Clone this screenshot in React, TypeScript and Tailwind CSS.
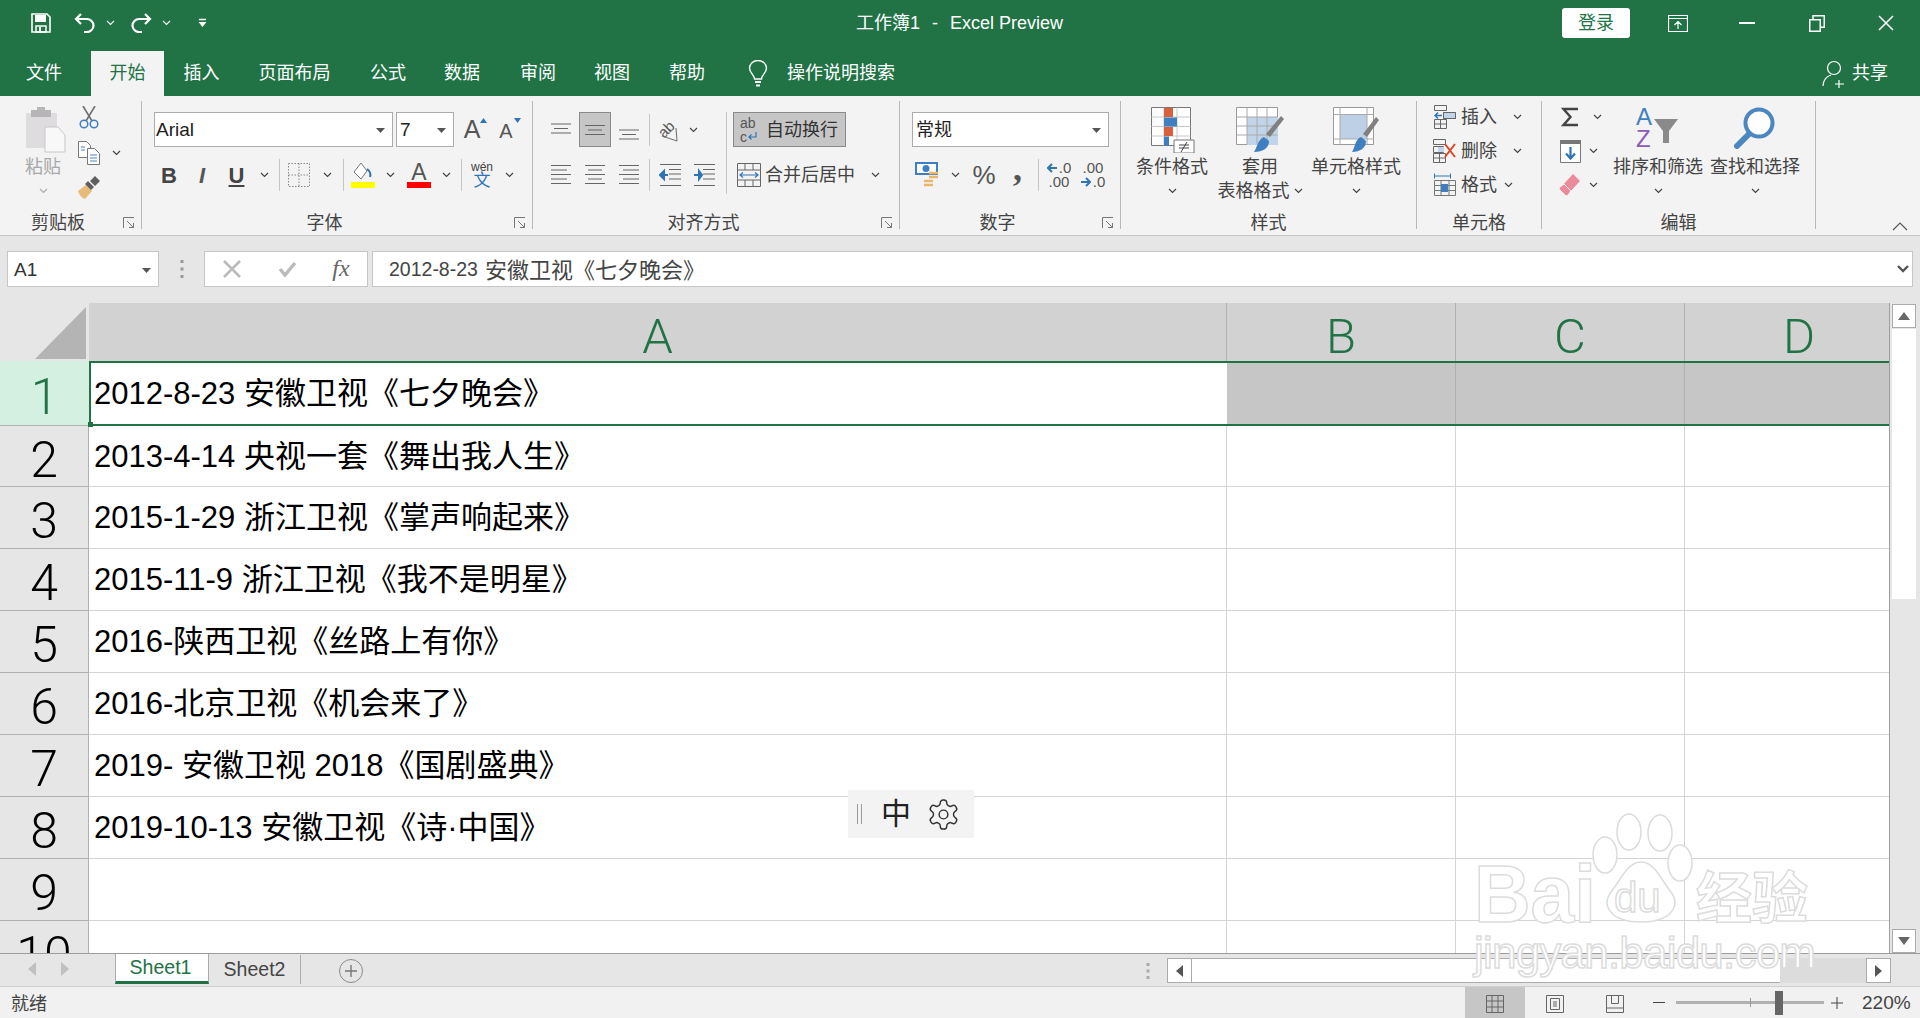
import type { ReactNode } from "react"

const C = ({ className, children }: { className?: string; children?: ReactNode }) => (
  <div className={"flex items-center justify-center shrink-0 " + (className ?? "")}>{children}</div>
)

const Chev = () => (
  <svg width="9" height="6" viewBox="0 0 9 6" className="shrink-0">
    <path d="M1 1l3.5 3.5L8 1" fill="none" stroke="#444" strokeWidth="1.2" />
  </svg>
)

const Caret = () => (
  <svg width="9" height="5" viewBox="0 0 9 5" className="shrink-0">
    <path d="M0 0h9L4.500 5z" fill="#555" />
  </svg>
)

const Launcher = () => (
  <svg width="12" height="12" viewBox="0 0 12 12">
    <path d="M.5 11V.5H11M4 4l6.500 6.500M10.500 6v4.500H6" fill="none" stroke="#777" strokeWidth="1" />
  </svg>
)

const Sep = () => <div className="w-px h-[32px] bg-[#c6c6c6]" />

const TextLines = ({ rows }: { rows: [number, number][] }) => (
  <svg width="22" height="24" viewBox="0 0 22 24">
    {rows.map(([a, b], i) => (
      <path key={i} d={`M${a} ${2.500 + i * 4.500}H${b}`} stroke="#666" strokeWidth="1" />
    ))}
  </svg>
)

const VAlign = ({ top }: { top: number }) => (
  <svg width="22" height="24" viewBox="0 0 22 24">
    {[0, 1, 2].map((i) => (
      <path key={i} d={`M${i === 1 ? 4 : 1} ${top + i * 4.500}H${i === 1 ? 18 : 21}`} stroke="#666" strokeWidth="1" />
    ))}
  </svg>
)

function Group({ w, label, launcher, children }: { w: string; label: string; launcher?: boolean; children: ReactNode }) {
  return (
    <div className={"h-[128px] flex flex-col shrink-0 border-r border-[#b9b9b9] " + w}>
      <div className="h-[112px] flex">{children}</div>
      <div className="h-[16px] flex items-center">
        <div className="flex-1 text-center text-[18px] leading-[16px] text-[#444] pt-[4px]">{label}</div>
        {launcher && <C className="w-[25px] h-[16px] pt-[4px]"><Launcher /></C>}
      </div>
    </div>
  )
}

function BigButton({ w, icon, lines, chevInline }: { w: string; icon: ReactNode; lines: string[]; chevInline?: boolean }) {
  return (
    <div className={"flex flex-col items-center pt-[6px] shrink-0 " + w}>
      <div className="h-[48px] flex items-start justify-center">{icon}</div>
      {lines.map((l, i) => (
        <div key={i} className="text-[18px] leading-[24px] text-[#444] whitespace-nowrap flex items-center gap-[4px]">
          {l}
          {chevInline && i === lines.length - 1 && <Chev />}
        </div>
      ))}
      {!chevInline && <C className="h-[23px]"><Chev /></C>}
    </div>
  )
}

const ColHead = ({ w, ch }: { w: string; ch: string }) => (
  <div className={"shrink-0 h-full bg-[#d2d2d2] border-r border-[#b1b1b1] flex items-center justify-center text-[#217346] text-[49px] font-light pt-[9px] [font-family:Roboto,sans-serif] " + w}>
    {ch}
  </div>
)

const rows = [
  ["2", "2013-4-14 央视一套《舞出我人生》"],
  ["3", "2015-1-29 浙江卫视《掌声响起来》"],
  ["4", "2015-11-9 浙江卫视《我不是明星》"],
  ["5", "2016-陕西卫视《丝路上有你》"],
  ["6", "2016-北京卫视《机会来了》"],
  ["7", "2019- 安徽卫视 2018《国剧盛典》"],
  ["8", "2019-10-13 安徽卫视《诗·中国》"],
  ["9", ""],
  ["10", ""],
]

export default function App() {
  return (
    <div className="relative w-[1920px] h-[1018px] overflow-hidden flex flex-col bg-white text-[#444] [font-family:'Liberation_Sans','Noto_Sans_CJK_SC',sans-serif]">
      {/* title bar */}
      <div className="h-[51px] shrink-0 bg-[#217346] flex items-center pb-[5px] text-white">
        <div className="w-[856px] shrink-0 flex items-center pl-[31px]">
          <svg width="20" height="20" viewBox="0 0 20 20">
            <path d="M1 1h15l3 3v15H1z" fill="none" stroke="#fff" strokeWidth="1.600" />
            <path d="M4 2h11v7H4z" fill="#fff" />
            <path d="M5 13h10v6H5z" fill="none" stroke="#fff" strokeWidth="1.500" />
            <path d="M8 14h2v4H8z" fill="#fff" />
          </svg>
          <svg width="22" height="20" viewBox="0 0 22 20" className="ml-[23px]">
            <path d="M7 1L2 6l5 5M2 6h11a6.500 6.500 0 0 1 0 13h-3" fill="none" stroke="#fff" strokeWidth="2.200" />
          </svg>
          <svg width="9" height="6" viewBox="0 0 9 6" className="ml-[10px]"><path d="M1 1l3.500 3.500L8 1" fill="none" stroke="#fff" strokeWidth="1.200" /></svg>
          <svg width="22" height="20" viewBox="0 0 22 20" className="ml-[15px]">
            <path d="M15 1l5 5-5 5M20 6H9a6.500 6.500 0 0 0 0 13h3" fill="none" stroke="#fff" strokeWidth="2.200" />
          </svg>
          <svg width="9" height="6" viewBox="0 0 9 6" className="ml-[10px]"><path d="M1 1l3.500 3.500L8 1" fill="none" stroke="#fff" strokeWidth="1.200" /></svg>
          <svg width="9" height="10" viewBox="0 0 9 10" className="ml-[27px]">
            <path d="M1 1.500h7" stroke="#fff" strokeWidth="1.500" /><path d="M.5 4h8L4.500 9z" fill="#fff" />
          </svg>
        </div>
        <div className="w-[210px] shrink-0 text-[18px] whitespace-nowrap leading-none flex">
          工作簿1<span className="mx-[12px]">-</span>Excel Preview
        </div>
        <div className="flex-1" />
        <div className="w-[68px] h-[30px] bg-white rounded-[3px] text-[#217346] text-[18px] flex items-center justify-center">登录</div>
        <C className="w-[69px] ml-[13px]">
          <svg width="20" height="17" viewBox="0 0 20 17"><path d="M.5.500h19v16H.5zM.5 3.500h19M10 14V6.500M6.500 10L10 6.500l3.500 3.500" fill="none" stroke="#fff" strokeWidth="1.200" /></svg>
        </C>
        <C className="w-[70px]"><div className="w-[16px] h-[2px] bg-white" /></C>
        <C className="w-[69px]">
          <svg width="16" height="17" viewBox="0 0 16 17"><path d="M.75 4.750h10.500v11.500H.75zM4 4.500V.75h11.250v11.500H11.500" fill="none" stroke="#fff" strokeWidth="1.500" /></svg>
        </C>
        <C className="w-[69px]">
          <svg width="16" height="16" viewBox="0 0 16 16"><path d="M1 1l14 14M15 1L1 15" stroke="#fff" strokeWidth="1.600" /></svg>
        </C>
      </div>

      {/* tabs */}
      <div className="h-[45px] shrink-0 bg-[#217346] flex items-center text-white text-[18px]">
        <C className="w-[91px] h-full pr-[3px]">文件</C>
        <C className="w-[73px] h-full bg-[#f3f3f3] text-[#217346]">开始</C>
        <C className="w-[75px] h-full">插入</C>
        <C className="w-[111px] h-full">页面布局</C>
        <C className="w-[76px] h-full">公式</C>
        <C className="w-[72px] h-full">数据</C>
        <C className="w-[80px] h-full">审阅</C>
        <C className="w-[68px] h-full">视图</C>
        <C className="w-[82px] h-full">帮助</C>
        <svg width="20" height="28" viewBox="0 0 20 28" className="ml-[20px]">
          <path d="M6.500 19c0-4-5-6-5-11a8.500 7.500 0 0 1 17 0c0 5-5 7-5 11z" fill="none" stroke="#fff" strokeWidth="1.400" />
          <path d="M7 22h6M8 25.500h4" stroke="#fff" strokeWidth="1.800" />
        </svg>
        <div className="ml-[19px]">操作说明搜索</div>
        <div className="flex-1" />
        <svg width="24" height="28" viewBox="0 0 24 28" className="mr-[6px]">
          <circle cx="12" cy="8" r="6.500" fill="none" stroke="#fff" strokeWidth="1.200" />
          <path d="M1 26c0-6 4-10 8-11M17 20v8M13 24h9" fill="none" stroke="#fff" strokeWidth="1.200" />
        </svg>
        <div className="mr-[32px]">共享</div>
      </div>

      {/* ribbon */}
      <div className="h-[140px] shrink-0 bg-[#f3f3f3] border-b border-[#c6c6c6] pt-[5px] flex relative">
        <Group w="w-[142px]" label="剪贴板" launcher>
          <div className="w-[74px] pt-[6px] pl-[12px] flex flex-col items-center">
            <div className="h-[48px] ml-[4px]">
              <svg width="41" height="46" viewBox="0 0 41 46">
                <path d="M1 6h31v35H1z" fill="#dedcde" />
                <path d="M6 3h6V0h8v3h6v7H6z" fill="#b7b5b7" />
                <path d="M20 20h13l7 8v17H20z" fill="#f8f8f8" stroke="#c9c7c9" />
              </svg>
            </div>
            <div className="text-[18px] leading-[24px] text-[#a8a8a8]">粘贴</div>
            <C className="h-[23px]"><svg width="9" height="6" viewBox="0 0 9 6"><path d="M1 1l3.500 3.500L8 1" fill="none" stroke="#aaa" strokeWidth="1.200" /></svg></C>
          </div>
          <div className="flex flex-col -mt-px">
            <C className="w-[30px] h-[35px]">
              <svg width="20" height="23" viewBox="0 0 20 23">
                <path d="M4 0l9 15M16 0L7 15" stroke="#6f6f6f" strokeWidth="1.600" />
                <circle cx="5" cy="18" r="3.800" fill="none" stroke="#3f7fbf" strokeWidth="1.500" />
                <circle cx="15" cy="18" r="3.800" fill="none" stroke="#3f7fbf" strokeWidth="1.500" />
              </svg>
            </C>
            <div className="h-[35px] flex items-center">
              <C className="w-[30px]">
                <svg width="22" height="24" viewBox="0 0 22 24">
                  <path d="M.5.500h8l4 4v12H.5z" fill="#fff" stroke="#777" />
                  <path d="M9.500 7.500h7l5 5v11h-12z" fill="#fff" stroke="#777" />
                  <path d="M3 6h4M3 9h4M12 14h7M12 17h7M12 20h7" stroke="#4a86c0" />
                </svg>
              </C>
              <div className="ml-[8px]"><Chev /></div>
            </div>
            <C className="w-[30px] h-[35px]">
              <svg width="24" height="24" viewBox="0 0 24 24">
                <path d="M1 15l8-6 6 6-7 8c-3-1-6-4-7-8z" fill="#e7bb78" />
                <path d="M8 8l6 6 3-3-6-6zM13 5l5-5 5 5-5 5z" fill="#5f5f5f" />
              </svg>
            </C>
          </div>
        </Group>

        <Group w="w-[391px]" label="字体" launcher>
          <div className="pt-[11px] pl-[12px] flex flex-col">
            <div className="h-[35px] flex items-center">
              <div className="w-[239px] h-full bg-white border border-[#ababab] flex items-center justify-between pl-[1px] pt-[1px] pr-[7px] text-[19px] text-[#222]">
                Arial <Caret />
              </div>
              <div className="w-[58px] h-full ml-[3px] bg-white border border-[#ababab] flex items-center justify-between pl-[3px] pt-[1px] pr-[7px] text-[19px] text-[#222]">
                7 <Caret />
              </div>
              <C className="w-[34px] h-full relative ml-[1px]">
                <span className="text-[25px] text-[#555]">A</span>
                <svg width="7" height="5" viewBox="0 0 7 5" className="absolute top-[6px] right-[2px]"><path d="M0 5h7L3.500 0z" fill="#2f75b5" /></svg>
              </C>
              <C className="w-[34px] h-full relative">
                <span className="text-[20px] text-[#555] pt-[3px]">A</span>
                <svg width="7" height="5" viewBox="0 0 7 5" className="absolute top-[6px] right-[2px]"><path d="M0 0h7L3.500 5z" fill="#2f75b5" /></svg>
              </C>
            </div>
            <div className="h-[36px] mt-[10px] flex items-center">
              <C className="w-[30px] text-[22px] font-bold text-[#444]">B</C>
              <C className="w-[36px] text-[22px] italic font-bold text-[#555]">I</C>
              <C className="w-[33px] text-[22px] font-bold underline text-[#444]">U</C>
              <C className="w-[22px]"><Chev /></C>
              <C className="w-[8px]"><Sep /></C>
              <C className="w-[32px]">
                <svg width="22" height="24" viewBox="0 0 22 24">
                  <path d="M.5.500h21v23H.5zM11 .500v23M.5 12h21" fill="none" stroke="#888" strokeDasharray="1.500 1.500" />
                </svg>
              </C>
              <C className="w-[24px]"><Chev /></C>
              <C className="w-[8px]"><Sep /></C>
              <C className="w-[32px]">
                <svg width="24" height="26" viewBox="0 0 24 26">
                  <path d="M10 1L3 10l7 7 6-8z" fill="#fff" stroke="#777" />
                  <path d="M16 7c3 2 4 5 3 8" fill="none" stroke="#2f75b5" strokeWidth="2" />
                  <rect y="20" width="24" height="6" fill="#ffff00" />
                </svg>
              </C>
              <C className="w-[22px]"><Chev /></C>
              <div className="w-[36px] flex flex-col items-center">
                <span className="text-[23px] leading-[18px] text-[#555]">A</span>
                <div className="w-[24px] h-[6px] bg-[#ff0000] mt-[1px]" />
              </div>
              <C className="w-[18px]"><Chev /></C>
              <C className="w-[12px]"><Sep /></C>
              <div className="w-[30px] flex flex-col items-center leading-none">
                <span className="text-[12px] text-[#444]">wén</span>
                <span className="text-[17px] text-[#2f75b5] -mt-px">文</span>
              </div>
              <C className="w-[24px]"><Chev /></C>
            </div>
          </div>
        </Group>

        <Group w="w-[367px]" label="对齐方式" launcher>
          <div className="pt-[11px] flex">
            <div className="w-[194px] h-[82px] pl-[12px] border-r border-[#c6c6c6] flex flex-col">
              <div className="h-[35px] flex items-center">
                <C className="w-[32px]"><VAlign top={6} /></C>
                <C className="w-[32px] h-full ml-[2px] bg-[#c6c6c6] border border-[#8a8a8a]"><VAlign top={7.500} /></C>
                <C className="w-[32px] ml-[2px]"><VAlign top={12} /></C>
                <C className="w-[8px]"><Sep /></C>
                <C className="w-[34px]">
                  <svg width="24" height="26" viewBox="0 0 24 26" className="overflow-visible">
                    <text x="1" y="18" fontSize="15" fill="#555" transform="rotate(-45 8 14)">ab</text>
                    <path d="M4 19l15 5M19 24l-1-13" fill="none" stroke="#777" strokeWidth="1.100" />
                  </svg>
                </C>
                <C className="w-[12px]"><Chev /></C>
              </div>
              <div className="h-[36px] mt-[10px] flex items-center">
                <C className="w-[32px]"><TextLines rows={[[1, 21], [1, 17], [1, 21], [1, 17], [1, 21]]} /></C>
                <C className="w-[32px] ml-[2px]"><TextLines rows={[[1, 21], [4, 18], [1, 21], [4, 18], [1, 21]]} /></C>
                <C className="w-[32px] ml-[2px]"><TextLines rows={[[1, 21], [5, 21], [1, 21], [5, 21], [1, 21]]} /></C>
                <C className="w-[8px]"><Sep /></C>
                <C className="w-[34px]">
                  <svg width="22" height="24" viewBox="0 0 22 24">
                    <path d="M1 1.500h21M10 6.500h12M10 11h12M10 16h12M1 22.500h21" stroke="#666" />
                    <path d="M9 12H4M5 8l-4 4 4 4z" stroke="#2f75b5" strokeWidth="2" fill="#2f75b5" />
                  </svg>
                </C>
                <C className="w-[34px]">
                  <svg width="22" height="24" viewBox="0 0 22 24">
                    <path d="M1 1.500h21M10 6.500h12M10 11h12M10 16h12M1 22.500h21" stroke="#666" />
                    <path d="M1 12h5M6 8l3 4-3 4z" stroke="#2f75b5" strokeWidth="2" fill="#2f75b5" />
                  </svg>
                </C>
              </div>
            </div>
            <div className="pl-[6px] flex flex-col">
              <div className="w-[113px] h-[35px] bg-[#c6c6c6] border border-[#8a8a8a] flex items-center pl-[6px]">
                <div className="w-[20px] flex flex-col text-[14px] leading-[14px] text-[#555]">
                  <span>ab</span>
                  <div className="flex items-center gap-[1px]">
                    c
                    <svg width="9" height="9" viewBox="0 0 9 9"><path d="M8 0v5H1M3.500 2.500L1 5l2.500 2.500" fill="none" stroke="#2f75b5" strokeWidth="1.200" /></svg>
                  </div>
                </div>
                <span className="ml-[6px] pt-[1px] text-[18px] text-[#333] whitespace-nowrap">自动换行</span>
              </div>
              <div className="h-[36px] mt-[10px] flex items-center pl-[4px]">
                <svg width="24" height="24" viewBox="0 0 24 24" className="shrink-0">
                  <path d="M.5.500h23v23H.5zM.5 7h23M.5 17h23M8 .500V7M16 .500V7M8 17v6.500M16 17v6.500" fill="none" stroke="#666" />
                  <path d="M3 12h18M6 9.500L3 12l3 2.500M18 9.500l3 2.500-3 2.500" fill="none" stroke="#2f75b5" strokeWidth="1.200" />
                </svg>
                <span className="ml-[4px] text-[18px] whitespace-nowrap">合并后居中</span>
                <div className="ml-[16px]"><Chev /></div>
              </div>
            </div>
          </div>
        </Group>

        <Group w="w-[221px]" label="数字" launcher>
          <div className="pt-[11px] pl-[12px] flex flex-col">
            <div className="w-[197px] h-[35px] bg-white border border-[#ababab] flex items-center justify-between pl-[3px] pt-[1px] pr-[7px] text-[18px] text-[#222]">
              常规 <Caret />
            </div>
            <div className="h-[36px] mt-[10px] flex items-center">
              <C className="w-[30px]">
                <svg width="24" height="26" viewBox="0 0 24 26">
                  <path d="M0 0h23v13H0z" fill="#3f7fbf" />
                  <path d="M2 2h19v9H2z" fill="#fff" />
                  <circle cx="11" cy="6.500" r="3.500" fill="#3f7fbf" />
                  <path d="M14 11h9M14 15h9M9 19h9M9 23h9" stroke="#e9b76b" strokeWidth="2.500" />
                </svg>
              </C>
              <C className="w-[26px]"><Chev /></C>
              <C className="w-[32px] text-[26px] text-[#555]">%</C>
              <C className="w-[35px] text-[36px] font-bold text-[#555] leading-none pb-[14px] [font-family:'Liberation_Serif',serif]">,</C>
              <C className="w-[6px]"><Sep /></C>
              <div className="w-[36px] flex flex-col items-center text-[15px] leading-[14px] text-[#555]">
                <div className="flex items-center gap-[2px]">
                  <svg width="10" height="10" viewBox="0 0 10 10"><path d="M10 5H2M5 1L1 5l4 4" fill="none" stroke="#2f75b5" strokeWidth="2" /></svg>
                  .0
                </div>
                <span>.00</span>
              </div>
              <div className="w-[32px] flex flex-col items-center text-[15px] leading-[14px] text-[#555]">
                <span>.00</span>
                <div className="flex items-center gap-[2px]">
                  <svg width="10" height="10" viewBox="0 0 10 10"><path d="M0 5h8M5 1l4 4-4 4" fill="none" stroke="#2f75b5" strokeWidth="2" /></svg>
                  .0
                </div>
              </div>
            </div>
          </div>
        </Group>

        <Group w="w-[296px]" label="样式">
          <div className="flex pl-[13px]">
            <BigButton
              w="w-[76px]"
              lines={["条件格式"]}
              icon={
                <svg width="44" height="46" viewBox="0 0 44 46" className="ml-[2px]">
                  <path d="M.5.500h39v38H.5z" fill="#fff" stroke="#777" />
                  <path d="M.5 10h39M.5 19.500h39M.5 29h39M13 .500v38M26 .500v38" stroke="#c8c8c8" />
                  <path d="M13 1h9v9h-9zM13 20h9v9h-9z" fill="#d9603f" />
                  <path d="M13 10.500h13v9H13zM13 29.500h5v9h-5z" fill="#3f7fbf" />
                  <path d="M23 33h20v13H23z" fill="#fff" stroke="#777" />
                  <path d="M28 38h10M28 41h10M36 35l-6 10" fill="none" stroke="#444" />
                </svg>
              }
            />
            <BigButton
              w="w-[100px]"
              lines={["套用", "表格格式"]}
              chevInline
              icon={
                <svg width="48" height="46" viewBox="0 0 48 46">
                  <path d="M.5.500h41v37H.5z" fill="#fff" stroke="#999" />
                  <path d="M11 10h31v28H11z" fill="#c1d5ea" />
                  <path d="M.5 10h41M.5 19h41M.5 28h41M11 .500v37M21 .500v37M31 .500v37" stroke="#aaa" />
                  <path d="M30 27l15-18 3 3-14 18z" fill="#808080" />
                  <path d="M28 30l5 4c0 7-6 11-15 11 3-4 4-13 10-15z" fill="#3f7fbf" />
                </svg>
              }
            />
            <BigButton
              w="w-[92px]"
              lines={["单元格样式"]}
              icon={
                <svg width="46" height="46" viewBox="0 0 46 46">
                  <path d="M.5.500h40v37H.5z" fill="#fff" stroke="#999" />
                  <path d="M7 8h27v24H7z" fill="#bdd0e6" />
                  <path d="M.5 7.500h40M.5 32h40M7 .500v37M34 .500v37" stroke="#aaa" />
                  <path d="M30 27l13-17 3 3-12 17z" fill="#808080" />
                  <path d="M28 30l5 4c0 7-6 11-14 11 3-4 3-13 9-15z" fill="#3f7fbf" />
                </svg>
              }
            />
          </div>
        </Group>

        <Group w="w-[125px]" label="单元格">
          <div className="flex flex-col -mt-px">
            <div className="h-[34px] flex items-center">
              <C className="w-[24px] ml-[16px]">
                <svg width="22" height="24" viewBox="0 0 22 24">
                  <path d="M.5.500h12v5H.5zM.5 14.500h12v9H.5zM6.500 14.500v9M.5 19h12M9.500 7.500h12v6h-12z" fill="none" stroke="#666" />
                  <path d="M9.500 7.500h12v6h-12z" fill="#c1d5ea" stroke="#666" />
                  <path d="M8 10.500H1M4 7.500l-3 3 3 3" fill="none" stroke="#2f75b5" strokeWidth="1.500" />
                </svg>
              </C>
              <span className="ml-[4px] w-[36px] text-[18px]">插入</span>
              <div className="ml-[16px]"><Chev /></div>
            </div>
            <div className="h-[34px] flex items-center">
              <C className="w-[24px] ml-[16px]">
                <svg width="24" height="24" viewBox="0 0 24 24">
                  <path d="M.5.500h12v5H.5zM.5 14.500h12v9H.5zM6.500 14.500v9M.5 19h12M.5 7.500h10v6H.5z" fill="none" stroke="#666" />
                  <path d="M5 8h6v5H5z" fill="#c1d5ea" />
                  <path d="M12 5l10 13M22 5L12 18" stroke="#d9482b" strokeWidth="2" />
                </svg>
              </C>
              <span className="ml-[4px] w-[36px] text-[18px]">删除</span>
              <div className="ml-[16px]"><Chev /></div>
            </div>
            <div className="h-[34px] flex items-center">
              <C className="w-[24px] ml-[16px]">
                <svg width="22" height="25" viewBox="0 0 22 25">
                  <path d="M.5 3h16M.5.500v5M16.500.500v5" stroke="#2f75b5" />
                  <path d="M.5 7.500h21v15H.5zM7 7.500v15M15 7.500v15M.5 12.500h21M.5 17.500h21" fill="none" stroke="#777" />
                  <path d="M7 11h7v8H7z" fill="#3f7fbf" />
                </svg>
              </C>
              <span className="ml-[4px] w-[36px] text-[18px]">格式</span>
              <div className="ml-[7px]"><Chev /></div>
            </div>
          </div>
        </Group>

        <Group w="w-[274px]" label="编辑">
          <div className="w-[68px] flex flex-col -mt-px">
            <div className="h-[34px] flex items-center">
              <C className="w-[26px] ml-[15px]">
                <svg width="18" height="20" viewBox="0 0 18 20"><path d="M17 2H2.500l7 8-7 8H17" fill="none" stroke="#444" strokeWidth="2.400" /></svg>
              </C>
              <div className="ml-[10px]"><Chev /></div>
            </div>
            <div className="h-[34px] flex items-center">
              <C className="w-[26px] ml-[15px]">
                <svg width="21" height="23" viewBox="0 0 21 23">
                  <path d="M.5.500h20v22H.5z" fill="#fff" stroke="#777" />
                  <path d="M0 0h21v4H0z" fill="#777" />
                  <path d="M10.500 7v11M6 13.500l4.500 5 4.500-5" fill="none" stroke="#2f75b5" strokeWidth="2.200" />
                </svg>
              </C>
              <div className="ml-[6px]"><Chev /></div>
            </div>
            <div className="h-[34px] flex items-center">
              <C className="w-[26px] ml-[15px]">
                <svg width="22" height="22" viewBox="0 0 22 22">
                  <path d="M14 0l7 7L9 20l-7-7z" fill="#ea8a9b" />
                  <path d="M5 10l7 7-3 4c-1 1-2 1-3 0L1 16c-1-1-1-2 0-3z" fill="#ea8a9b" stroke="#f3f3f3" />
                </svg>
              </C>
              <div className="ml-[6px]"><Chev /></div>
            </div>
          </div>
          <BigButton
            w="w-[96px]"
            lines={["排序和筛选"]}
            icon={
              <svg width="44" height="41" viewBox="0 0 44 41" className="overflow-visible">
                <text x="0" y="18" fontSize="24" fill="#3f7fbf" fontWeight="400">A</text>
                <text x="0" y="40" fontSize="24" fill="#8e5bb5" fontWeight="400">Z</text>
                <path d="M18 12h24L33 24v12h-6V24z" fill="#8a8a8a" />
              </svg>
            }
          />
          <BigButton
            w="w-[98px]"
            lines={["查找和选择"]}
            icon={
              <svg width="42" height="42" viewBox="0 0 42 42">
                <circle cx="25" cy="16" r="13.500" fill="#fff" stroke="#4a86c0" strokeWidth="4" />
                <path d="M15 27L3 39" stroke="#4a86c0" strokeWidth="6" strokeLinecap="round" />
              </svg>
            }
          />
        </Group>

        <svg width="16" height="9" viewBox="0 0 16 9" className="absolute left-[1892px] top-[126px]">
          <path d="M1 8l7-7 7 7" fill="none" stroke="#555" strokeWidth="1.200" />
        </svg>
      </div>

      {/* formula bar */}
      <div className="h-[67px] shrink-0 bg-[#e6e6e6] pt-[15px] flex items-start">
        <div className="w-[152px] h-[36px] ml-[7px] bg-white border border-[#c6c6c6] flex items-center justify-between pl-[6px] pt-[2px] pr-[7px] text-[19px] text-[#333]">
          A1 <Caret />
        </div>
        <C className="w-[45px] h-[36px]">
          <svg width="4" height="20" viewBox="0 0 4 20"><path d="M2 1v3M2 8.500v3M2 16v3" stroke="#999" strokeWidth="3" /></svg>
        </C>
        <div className="w-[164px] h-[36px] bg-white border border-[#c6c6c6] flex items-center">
          <C className="w-[54px]">
            <svg width="18" height="18" viewBox="0 0 18 18"><path d="M1 1l16 16M17 1L1 17" stroke="#bbb" strokeWidth="2.500" /></svg>
          </C>
          <C className="w-[56px]">
            <svg width="19" height="16" viewBox="0 0 19 16"><path d="M2 8l5 6L17 2" fill="none" stroke="#bbb" strokeWidth="3.500" /></svg>
          </C>
          <C className="w-[52px] italic text-[24px] pb-[3px] text-[#666] [font-family:'Liberation_Serif',serif]">fx</C>
        </div>
        <div className="w-[1541px] h-[36px] ml-[4px] bg-white border border-[#c6c6c6] flex items-center pl-[16px] pt-[2px] text-[22px] text-[#444] relative">
          <span className="text-[19.500px] mr-[7px]">2012-8-23</span>安徽卫视《七夕晚会》
          <svg width="12" height="9" viewBox="0 0 12 9" className="absolute right-[3px] top-[13px]">
            <path d="M1 1l5 5 5-5" fill="none" stroke="#555" strokeWidth="2.400" />
          </svg>
        </div>
      </div>

      {/* grid */}
      <div className="h-[651px] shrink-0 flex overflow-hidden border-b border-[#9c9c9c]">
        <div className="w-[1890px] shrink-0 overflow-hidden border-r border-[#a0a0a0] flex flex-col">
          <div className="h-[58px] shrink-0 flex">
            <div className="w-[89px] shrink-0 bg-[#e6e6e6] pt-[4px] pl-[35px]">
              <svg width="51" height="52" viewBox="0 0 51 52"><path d="M51 0v52H0z" fill="#b4b4b4" /></svg>
            </div>
            <ColHead w="w-[1138px]" ch="A" />
            <ColHead w="w-[229px]" ch="B" />
            <ColHead w="w-[229px]" ch="C" />
            <ColHead w="w-[229px]" ch="D" />
          </div>

          <div className="h-[65px] shrink-0 flex">
            <div className="w-[89px] shrink-0 bg-[#d3f0e0] border-b border-[#b1b1b1] flex items-center justify-center text-[#217346] text-[50px] font-light pt-[8px] [font-family:Roboto,sans-serif]">
              1
            </div>
            <div className="flex-1 flex border-y-2 border-[#217346] relative">
              <div className="w-[1138px] shrink-0 bg-white border-l-2 border-[#217346] flex items-center pl-[3px] pt-[2px] text-[31px] text-black whitespace-nowrap">
                2012-8-23 安徽卫视《七夕晚会》
              </div>
              <div className="w-[229px] shrink-0 bg-[#c6c6c6] border-r border-[#b1b1b1]" />
              <div className="w-[229px] shrink-0 bg-[#c6c6c6] border-r border-[#b1b1b1]" />
              <div className="w-[229px] shrink-0 bg-[#c6c6c6]" />
              <div className="absolute -left-px -bottom-[3px] w-[5px] h-[5px] bg-[#217346]" />
            </div>
          </div>

          {rows.map(([n, t], i) => (
            <div key={n} className={"shrink-0 flex " + (i === 0 ? "h-[61px]" : "h-[62px]")}>
              <div className="w-[89px] shrink-0 bg-[#e6e6e6] border-r border-b border-[#b1b1b1] flex items-center justify-center text-black text-[50px] font-light pt-[8px] [font-family:Roboto,sans-serif]">
                {n}
              </div>
              <div className="w-[1138px] shrink-0 border-r border-b border-[#d4d4d4] flex items-center pl-[5px] pt-[2px] text-[31px] text-black whitespace-nowrap">
                {t}
              </div>
              <div className="w-[229px] shrink-0 border-r border-b border-[#d4d4d4]" />
              <div className="w-[229px] shrink-0 border-r border-b border-[#d4d4d4]" />
              <div className="w-[229px] shrink-0 border-b border-[#d4d4d4]" />
            </div>
          ))}
        </div>
        <div className="flex-1 bg-[#e6e6e6] pl-[2px] pr-[4px] pt-[1px] flex flex-col">
          <C className="h-[24px] bg-white border border-[#ababab]">
            <svg width="12" height="8" viewBox="0 0 12 8"><path d="M0 8h12L6 0z" fill="#666" /></svg>
          </C>
          <div className="h-[270px] mt-[1px] bg-white" />
          <div className="flex-1" />
          <C className="h-[24px] bg-white border border-[#ababab]">
            <svg width="12" height="8" viewBox="0 0 12 8"><path d="M0 0h12L6 8z" fill="#666" /></svg>
          </C>
        </div>
      </div>

      {/* sheet tabs */}
      <div className="h-[33px] shrink-0 bg-[#e6e6e6] border-b border-[#d0d0d0] flex items-start">
        <div className="w-[115px] h-[30px] shrink-0 flex items-center pl-[28px] gap-[25px]">
          <svg width="8" height="14" viewBox="0 0 8 14"><path d="M8 0v14L0 7z" fill="#c0c0c0" /></svg>
          <svg width="8" height="14" viewBox="0 0 8 14"><path d="M0 0v14l8-7z" fill="#c0c0c0" /></svg>
        </div>
        <div className="w-[94px] h-[30px] shrink-0 bg-white border-x border-[#ababab] border-b-[3px] border-b-[#217346] flex items-center justify-center text-[#217346] text-[19.500px] pr-[3px]">
          Sheet1
        </div>
        <div className="w-[92px] h-[29px] shrink-0 border-r border-[#ababab] flex items-center justify-center text-[19.500px] text-[#444] mt-[1px]">
          Sheet2
        </div>
        <C className="w-[24px] h-[24px] ml-[38px] mt-[5px] rounded-full border border-[#8a8a8a] text-[#777]">
          <svg width="12" height="12" viewBox="0 0 12 12"><path d="M6 0v12M0 6h12" stroke="#777" strokeWidth="1.400" /></svg>
        </C>
        <div className="flex-1" />
        <C className="w-[20px] h-[28px] mt-[3px]">
          <svg width="4" height="16" viewBox="0 0 4 16"><path d="M2 0v3M2 6.500v3M2 13v3" stroke="#aaa" strokeWidth="3" /></svg>
        </C>
        <div className="ml-[9px] mr-[29px] mt-[4px] h-[25px] flex">
          <C className="w-[25px] h-full bg-white border border-[#ababab]">
            <svg width="7" height="12" viewBox="0 0 7 12"><path d="M7 0v12L0 6z" fill="#555" /></svg>
          </C>
          <div className="w-[588px] h-full bg-white border-y border-[#ababab]" />
          <div className="w-[86px] h-full bg-[#dcdcdc]" />
          <C className="w-[25px] h-full bg-white border border-[#ababab]">
            <svg width="7" height="12" viewBox="0 0 7 12"><path d="M0 0v12l7-6z" fill="#555" /></svg>
          </C>
        </div>
      </div>

      {/* status bar */}
      <div className="flex-1 bg-[#f1f1f1] flex items-center pl-[11px] text-[18px] text-[#444]">
        <span className="pt-[3px]">就绪</span>
        <div className="flex-1" />
        <C className="w-[60px] h-full bg-[#c6c6c6]">
          <svg width="18" height="18" viewBox="0 0 18 18" className="mt-[2px]"><path d="M.5.500h17v17H.5zM.5 6h17M.5 12h17M6 .500v17M12 .500v17" fill="none" stroke="#666" /></svg>
        </C>
        <C className="w-[59px] h-full">
          <svg width="18" height="18" viewBox="0 0 18 18" className="mt-[2px]"><path d="M.5.500h17v17H.5zM4.500 3.500h9v11h-9zM7 7h4M7 9h4M7 11h4" fill="none" stroke="#666" /></svg>
        </C>
        <C className="w-[62px] h-full">
          <svg width="18" height="18" viewBox="0 0 18 18" className="mt-[2px]"><path d="M.5.500h17v17H.5zM5.500.500v8h7v-8M.5 13h17" fill="none" stroke="#666" /></svg>
        </C>
        <div className="w-[12px] h-px bg-[#444] ml-[7px]" />
        <div className="w-[148px] h-[3px] bg-[#b1b1b1] ml-[11px] flex items-center relative">
          <div className="absolute left-[74px] w-px h-[9px] bg-[#999]" />
          <div className="absolute left-[99px] w-[8px] h-[24px] bg-[#666]" />
        </div>
        <svg width="12" height="12" viewBox="0 0 12 12" className="ml-[7px]"><path d="M6 0v12M0 6h12" stroke="#444" /></svg>
        <span className="ml-[19px] w-[58px] text-[19px] pt-[2px]">220%</span>
      </div>

      {/* IME toolbar */}
      <div className="absolute left-[848px] top-[790px] w-[126px] h-[48px] bg-[#f3f3f3] flex items-center">
        <div className="ml-[9px] w-[5px] h-[20px] border-x border-[#999]" />
        <span className="ml-[19px] text-[30px] text-[#222] leading-none">中</span>
        <svg width="35" height="35" viewBox="0 0 24 24" fill="none" stroke="#333" strokeWidth="1" className="ml-[15px]">
          <path d="M12.220 2h-.44a2 2 0 0 0-2 2v.180a2 2 0 0 1-1 1.730l-.43.250a2 2 0 0 1-2 0l-.150-.080a2 2 0 0 0-2.730.730l-.220.380a2 2 0 0 0 .730 2.730l.150.100a2 2 0 0 1 1 1.720v.510a2 2 0 0 1-1 1.740l-.150.090a2 2 0 0 0-.730 2.730l.220.380a2 2 0 0 0 2.730.730l.150-.080a2 2 0 0 1 2 0l.430.250a2 2 0 0 1 1 1.730V20a2 2 0 0 0 2 2h.440a2 2 0 0 0 2-2v-.180a2 2 0 0 1 1-1.730l.430-.250a2 2 0 0 1 2 0l.150.080a2 2 0 0 0 2.730-.730l.220-.390a2 2 0 0 0-.730-2.730l-.150-.080a2 2 0 0 1-1-1.740v-.500a2 2 0 0 1 1-1.740l.150-.090a2 2 0 0 0 .730-2.730l-.220-.380a2 2 0 0 0-2.730-.730l-.150.080a2 2 0 0 1-2 0l-.430-.250a2 2 0 0 1-1-1.730V4a2 2 0 0 0-2-2z" />
          <circle cx="12" cy="12" r="3" />
        </svg>
      </div>

      {/* baidu watermark */}
      <svg width="370" height="190" viewBox="0 0 370 190" className="absolute left-[1460px] top-[800px]" fill="#fff" stroke="#dcdcdc" strokeWidth="1.500">
        <ellipse cx="169" cy="32" rx="12" ry="18" />
        <ellipse cx="200" cy="33" rx="12" ry="18" />
        <ellipse cx="145" cy="55" rx="12" ry="18" />
        <ellipse cx="220" cy="63" rx="12" ry="18" />
        <path d="M181 62c14 0 20 18 30 30 10 14 0 30-30 30s-40-16-30-30c10-12 16-30 30-30z" />
        <text x="14" y="122" fontSize="82" fontWeight="700" textLength="122" lengthAdjust="spacingAndGlyphs">Bai</text>
        <text x="154" y="112" fontSize="42">du</text>
        <text x="236" y="118" fontSize="56" fontWeight="700">经验</text>
        <text x="14" y="168" fontSize="44" textLength="342">jingyan.baidu.com</text>
      </svg>
    </div>
  )
}
